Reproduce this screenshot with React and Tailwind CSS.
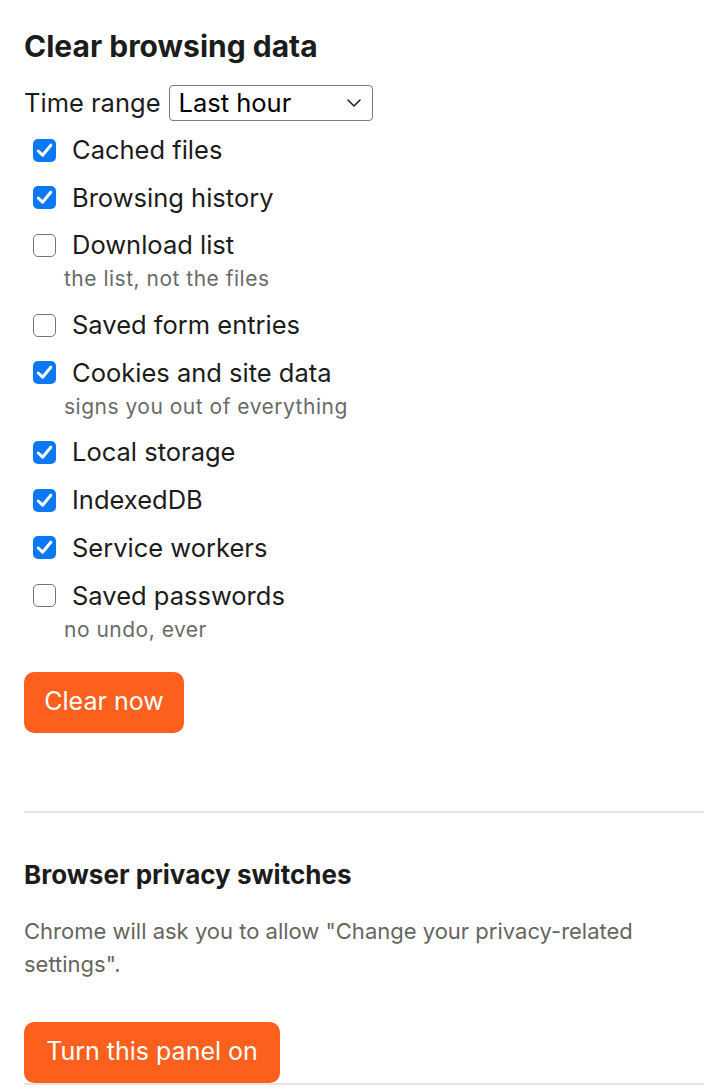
import React from "react";

function Check({ checked }) {
  if (checked) {
    return (
      <span className="flex h-[23px] w-[23px] shrink-0 items-center justify-center rounded-[5px] bg-[#0b78f5]">
        <svg width="23" height="23" viewBox="0 0 23 23" fill="none">
          <path d="M5.2 12 L9.6 16.2 L17.8 6.2" stroke="white" strokeWidth="3" strokeLinecap="round" strokeLinejoin="round" />
        </svg>
      </span>
    );
  }
  return <span className="h-[23px] w-[23px] shrink-0 rounded-[5px] border border-[#767676] bg-white" />;
}

const items = [
  { label: "Cached files", checked: true },
  { label: "Browsing history", checked: true },
  { label: "Download list", checked: false, sub: "the list, not the files" },
  { label: "Saved form entries", checked: false },
  { label: "Cookies and site data", checked: true, sub: "signs you out of everything" },
  { label: "Local storage", checked: true },
  { label: "IndexedDB", checked: true },
  { label: "Service workers", checked: true },
  { label: "Saved passwords", checked: false, sub: "no undo, ever" },
];

export default function App() {
  return (
    <div className="min-h-[1090px] bg-white px-6 text-[#1c1c1c]" style={{ fontFamily: "Inter, 'Liberation Sans', sans-serif" }}>
      <h1 className="pt-[28px] text-[30px] font-bold leading-[36px]">Clear browsing data</h1>
      <div className="mt-[21px] flex items-center gap-[8px]">
        <span className="text-[25.5px] leading-[36px]">Time range</span>
        <div className="flex h-[36px] w-[204px] items-center justify-between rounded-[4px] border border-[#7a7a7a] pl-[9px] pr-[10px]">
          <span className="text-[25.5px] leading-[30px] text-black">Last hour</span>
          <svg width="16" height="10" viewBox="0 0 16 10" fill="none">
            <path d="M2 2 L8 8 L14 2" stroke="#222" strokeWidth="1.6" strokeLinecap="round" strokeLinejoin="round" />
          </svg>
        </div>
      </div>
      <div className="flex flex-col gap-[11.7px] pt-[11px]">
        {items.map((it) => (
          <div key={it.label}>
            <div className="flex h-[36px] items-center gap-[16px] pl-[9px]">
              <Check checked={it.checked} />
              <span className="text-[25.5px] leading-[36px]">{it.label}</span>
            </div>
            {it.sub && (
              <div className="pl-[40px] text-[21px] leading-[32px] tracking-[0.5px] text-[#6a6a6a]">{it.sub}</div>
            )}
          </div>
        ))}
      </div>
      <button className="mt-[26px] h-[61px] w-[160px] rounded-[10px] bg-[#fd5f1d] text-[25px] text-white">Clear now</button>
      <div className="mt-[78px] h-[2px] bg-[#e6e4dc]" />
      <h2 className="mt-[46px] text-[26px] font-bold leading-[32px]">Browser privacy switches</h2>
      <p className="mt-[24px] text-[22px] leading-[33px] text-[#66655e]">
        Chrome will ask you to allow "Change your privacy-related settings".
      </p>
      <button className="mt-[41px] h-[61px] w-[256px] rounded-[10px] bg-[#fd5f1d] text-[25px] text-white">Turn this panel on</button>
      <div className="h-[2px] bg-[#e6e4dc]" />
    </div>
  );
}
